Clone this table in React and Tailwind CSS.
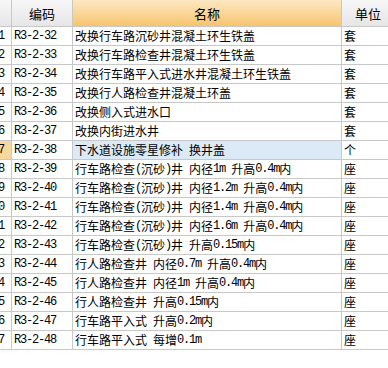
import React from "react";

const rows = [
  ["R3-2-32", "改换行车路沉砂井混凝土环生铁盖", "套"],
  ["R3-2-33", "改换行车路检查井混凝土环生铁盖", "套"],
  ["R3-2-34", "改换行车路平入式进水井混凝土环生铁盖", "套"],
  ["R3-2-35", "改换行人路检查井混凝土环盖", "套"],
  ["R3-2-36", "改换侧入式进水口", "套"],
  ["R3-2-37", "改换内街进水井", "套"],
  ["R3-2-38", "下水道设施零星修补 换井盖", "个"],
  ["R3-2-39", "行车路检查(沉砂)井 内径1m 升高0.4m内", "座"],
  ["R3-2-40", "行车路检查(沉砂)井 内径1.2m 升高0.4m内", "座"],
  ["R3-2-41", "行车路检查(沉砂)井 内径1.4m 升高0.4m内", "座"],
  ["R3-2-42", "行车路检查(沉砂)井 内径1.6m 升高0.4m内", "座"],
  ["R3-2-43", "行车路检查(沉砂)井 升高0.15m内", "座"],
  ["R3-2-44", "行人路检查井 内径0.7m 升高0.4m内", "座"],
  ["R3-2-45", "行人路检查井 内径1m 升高0.4m内", "座"],
  ["R3-2-46", "行人路检查井 升高0.15m内", "座"],
  ["R3-2-47", "行车路平入式 升高0.2m内", "座"],
  ["R3-2-48", "行车路平入式 每增0.1m", "座"],
];

function Mixed({ text }) {
  const parts = text.match(/[\x00-\x7f]+|[^\x00-\x7f]+/g) || [];
  return (
    <>
      {parts.map((p, i) =>
        /^[\x00-\x7f]+$/.test(p) ? (
          <span key={i} className="font-['Liberation_Mono',monospace] tracking-[-1.2px] whitespace-pre">
            {p}
          </span>
        ) : (
          <span key={i} className="font-['Noto_Sans_CJK_SC',sans-serif]">
            {p}
          </span>
        )
      )}
    </>
  );
}

export default function App() {
  return (
    <div className="w-[388px] h-[368px] bg-white overflow-hidden text-[12px] leading-none text-black">
      <div className="grid grid-cols-[12px_61px_269px_60px] h-[27px] border-b border-[#c8c8c8] bg-gradient-to-b from-[#f7f7f7] to-[#e6e6e6]">
        <div className="border-r border-[#c8c8c8]"></div>
        <div className="border-r border-[#c8c8c8] flex items-center justify-center text-[13px] font-['Noto_Sans_CJK_SC',sans-serif]">编码</div>
        <div className="border-r border-[#c8c8c8] flex items-center justify-center text-[13px] font-['Noto_Sans_CJK_SC',sans-serif] bg-gradient-to-b from-[#fde8c2] to-[#f6c46c]">名称</div>
        <div className="flex items-center pl-[13px] text-[13px] font-['Noto_Sans_CJK_SC',sans-serif]">单位</div>
      </div>
      {rows.map((r, i) => {
        const sel = i === 6;
        return (
          <div key={r[0]} className="grid grid-cols-[12px_61px_269px_60px] h-[19px] border-b border-[#c8c8c8]">
            <div className={`border-r border-[#c8c8c8] overflow-hidden flex items-center justify-end pr-[7px] font-['Liberation_Mono',monospace] tracking-[-1.2px] ${sel ? "bg-[#f8d89c]" : ""}`}>
              <span className="whitespace-nowrap">{i + 11}</span>
            </div>
            <div className="border-r border-[#c8c8c8] flex items-center pl-[2px] font-['Liberation_Mono',monospace] tracking-[-1.2px] whitespace-pre">
              {r[0]}
            </div>
            <div className={`border-r border-[#c8c8c8] flex items-center pl-[2px] whitespace-nowrap overflow-hidden ${sel ? "bg-[#dce9f7]" : ""}`}>
              <Mixed text={r[1]} />
            </div>
            <div className="flex items-center pl-[2px] font-['Noto_Sans_CJK_SC',sans-serif]">{r[2]}</div>
          </div>
        );
      })}
    </div>
  );
}
